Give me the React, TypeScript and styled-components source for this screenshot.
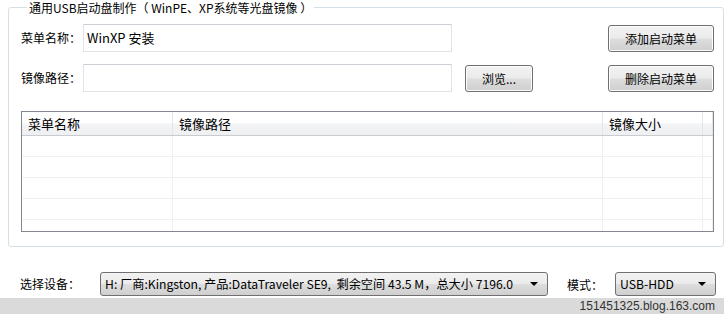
import React from "react";
import styled, { createGlobalStyle } from "styled-components";

const GlobalStyle = createGlobalStyle`
  html, body {
    margin: 0;
    padding: 0;
    background: #ffffff;
    overflow: hidden;
  }
  body {
    font-family: "Noto Sans CJK SC", "Liberation Sans", sans-serif;
    font-size: 12px;
    color: #000;
  }
`;

const columns = [
  { title: "菜单名称", width: 151 },
  { title: "镜像路径", width: 430 },
  { title: "镜像大小", width: 100 },
];

const Page = styled.div`
  width: 724px;
  height: 314px;
  display: flex;
  flex-direction: column;
`;

const GroupBox = styled.fieldset`
  margin: 0 0 0 8px;
  padding: 9px 0 14px 12px;
  width: 716px;
  border: 1px solid #d5dfe5;
  border-radius: 3px;
  box-sizing: border-box;
  min-width: 0;
  legend {
    margin-left: 6px;
    padding: 0 2px;
    line-height: 15px;
    height: 15px;
  }
`;

const FormGrid = styled.div`
  display: grid;
  grid-template-columns: 62px 369px 156px 106px;
  grid-auto-rows: 28px;
  row-gap: 12px;
  align-items: center;
`;

const Label = styled.span`
  white-space: nowrap;
  line-height: 28px;
`;

const TextBox = styled.div`
  height: 28px;
  box-sizing: border-box;
  border: 1px solid #e2e3ea;
  border-top-color: #cdd0d6;
  padding: 0 3px;
  line-height: 26px;
  font-size: 13px;
`;

const Button = styled.button<{ $w?: number; $ml?: number }>`
  width: ${(p) => p.$w ?? 106}px;
  margin-left: ${(p) => p.$ml ?? 0}px;
  height: 27px;
  box-sizing: border-box;
  border: 1px solid #707070;
  border-radius: 3px;
  background: linear-gradient(#f2f2f2 0%, #ebebeb 48%, #dddddd 52%, #cfcfcf 100%);
  box-shadow: inset 0 0 0 1px #fcfcfc;
  font-family: inherit;
  font-size: 12px;
  color: #000;
  padding: 0;
  line-height: 25px;
`;

const Table = styled.div`
  margin-top: 19px;
  width: 693px;
  height: 121px;
  box-sizing: border-box;
  border: 1px solid #828790;
  overflow: hidden;
`;

const Row = styled.div<{ $header?: boolean }>`
  display: grid;
  grid-template-columns: 151px 430px 100px 10px;
  height: ${(p) => (p.$header ? 24 : 21)}px;
  box-sizing: border-box;
  border-bottom: 1px solid ${(p) => (p.$header ? "#c9cbd0" : "#f0f0f0")};
  background: ${(p) =>
    p.$header ? "linear-gradient(#ffffff 0%, #ffffff 45%, #f2f3f5 55%, #eef0f2 100%)" : "#fff"};
`;

const Cell = styled.div<{ $header?: boolean }>`
  border-right: 1px solid ${(p) => (p.$header ? "#e3e5e8" : "#f0f0f0")};
  padding-left: 6px;
  line-height: 23px;
  font-size: 13px;
  white-space: nowrap;
`;

const DeviceRow = styled.div`
  display: flex;
  align-items: center;
  margin-top: 25px;
  height: 24px;
  padding-left: 20px;
`;

const Combo = styled.div<{ $w: number }>`
  width: ${(p) => p.$w}px;
  height: 24px;
  box-sizing: border-box;
  border: 1px solid #707070;
  border-radius: 3px;
  background: linear-gradient(#f2f2f2 0%, #ebebeb 48%, #dddddd 52%, #cfcfcf 100%);
  display: flex;
  align-items: center;
  padding: 0 9px 0 4px;
  font-size: 12.2px;
  white-space: nowrap;
  overflow: hidden;
  span {
    flex: 1;
    overflow: hidden;
  }
`;

const Arrow = styled.i`
  width: 0;
  height: 0;
  border-left: 4px solid transparent;
  border-right: 4px solid transparent;
  border-top: 4px solid #000;
  margin-left: 6px;
`;

const ModeLabel = styled.span`
  margin: 0 12px 0 19px;
`;

const Footer = styled.div`
  margin-top: auto;
  height: 16px;
  background: #dadada;
  display: flex;
  justify-content: flex-end;
  align-items: center;
  padding-right: 9px;
  font-family: "Liberation Sans", Arial, sans-serif;
  font-size: 12px;
  color: #333;
`;

export default function App() {
  return (
    <Page>
      <GlobalStyle />
      <GroupBox>
        <legend>通用USB启动盘制作（ WinPE、XP系统等光盘镜像 ）</legend>
        <FormGrid>
          <Label>菜单名称：</Label>
          <TextBox>WinXP 安装</TextBox>
          <span />
          <Button>添加启动菜单</Button>
          <Label>镜像路径：</Label>
          <TextBox />
          <Button $w={68} $ml={13}>浏览...</Button>
          <Button>删除启动菜单</Button>
        </FormGrid>
        <Table>
          <Row $header>
            {columns.map((c) => (
              <Cell $header key={c.title}>{c.title}</Cell>
            ))}
            <Cell $header />
          </Row>
          {[0, 1, 2, 3, 4].map((i) => (
            <Row key={i}>
              <Cell />
              <Cell />
              <Cell />
              <Cell />
            </Row>
          ))}
        </Table>
      </GroupBox>
      <DeviceRow>
        <Label style={{ marginRight: 20 }}>选择设备：</Label>
        <Combo $w={448}>
          <span>H: 厂商:Kingston, 产品:DataTraveler SE9,&nbsp; 剩余空间 43.5 M，总大小 7196.0</span>
          <Arrow />
        </Combo>
        <ModeLabel>模式：</ModeLabel>
        <Combo $w={101}>
          <span>USB-HDD</span>
          <Arrow />
        </Combo>
      </DeviceRow>
      <Footer>151451325.blog.163.com</Footer>
    </Page>
  );
}
